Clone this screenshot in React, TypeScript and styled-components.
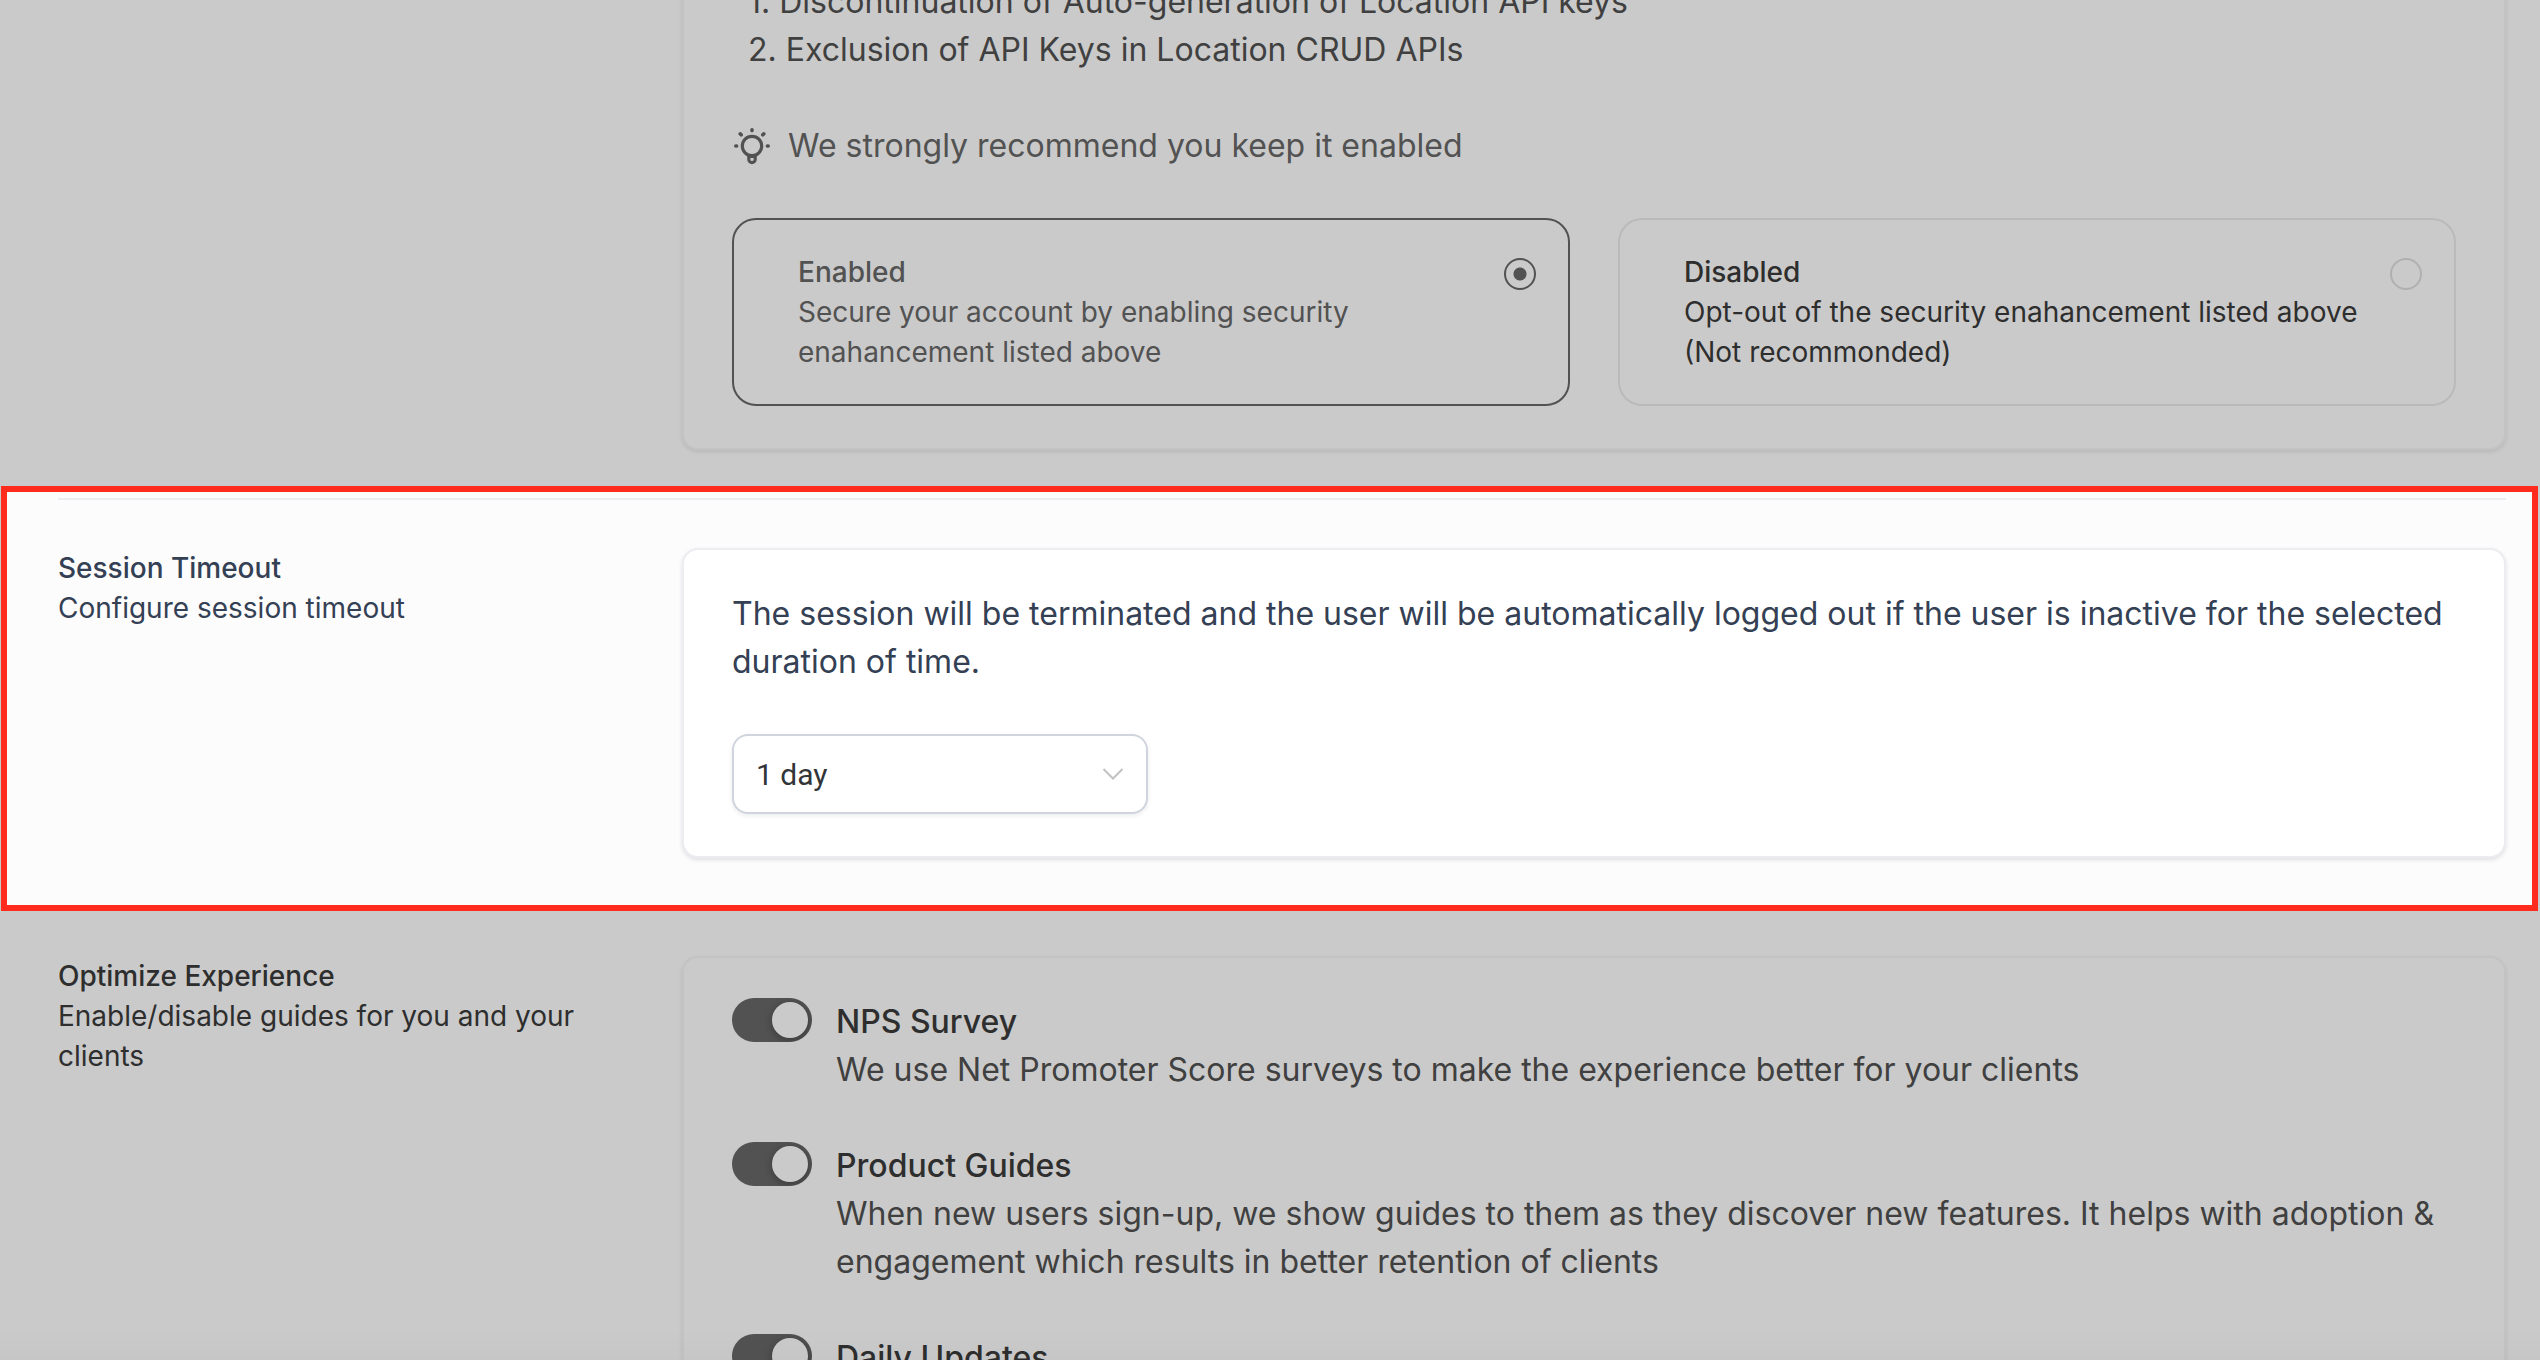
import React from "react";
import styled, { createGlobalStyle } from "styled-components";

const GlobalStyle = createGlobalStyle`
  * { box-sizing: border-box; }
  body {
    margin: 0;
    background: #cacaca;
    font-family: Inter, "Liberation Sans", sans-serif;
    overflow: hidden;
    -webkit-font-smoothing: antialiased;
  }
  p, h2, h3, ol, fieldset { margin: 0; padding: 0; border: 0; }
`;

const Page = styled.main`
  position: relative;
  height: 100vh;
  overflow: hidden;
`;

/* The settings list is shown scrolled part of the way down. */
const SettingsList = styled.div`
  margin-top: -64px;
`;

const Section = styled.section`
  position: relative;
  padding: 0 34px 48px 58px;
`;

const Row = styled.div<{ $line?: string }>`
  position: relative;
  display: grid;
  grid-template-columns: repeat(4, minmax(0, 1fr));
  column-gap: 48px;
  align-items: start;
  ${(p) => p.$line && `border-top: 2px solid ${p.$line}; padding-top: 48px;`}
`;

const RaisedRow = styled(Row)`
  z-index: 2;
`;

const Highlight = styled.div`
  position: absolute;
  z-index: 1;
  inset: -12px 2px -5px 1px;
  border: 6px solid #ff2b1c;
  background: #fcfcfc;
`;

const Intro = styled.header<{ $color: string }>`
  font-size: 28px;
  line-height: 40px;
  color: ${(p) => p.$color};
`;

const IntroTitle = styled.h2`
  font-size: 28px;
  font-weight: 500;
`;

const Card = styled.div<{ $lit?: boolean }>`
  grid-column: 2 / span 3;
  display: flex;
  flex-direction: column;
  gap: 48px;
  padding: 40px 48px 42px;
  border: 2px solid ${(p) => (p.$lit ? "#ececf1" : "#c3c3c3")};
  border-radius: 16px;
  background: ${(p) => (p.$lit ? "#ffffff" : "#cacaca")};
  box-shadow: 0 2px 4px ${(p) => (p.$lit ? "rgba(16, 24, 40, 0.12)" : "rgba(0, 0, 0, 0.09)")};
`;

const BodyText = styled.p<{ $color: string }>`
  font-size: 32px;
  line-height: 48px;
  color: ${(p) => p.$color};
`;

const Changes = styled.ol`
  list-style: none;
  padding-left: 16px;
  font-size: 32px;
  line-height: 48px;
  color: #404040;
`;

const Hint = styled.div`
  display: flex;
  align-items: center;
  gap: 16px;
  color: #525252;
`;

const Options = styled.fieldset`
  display: grid;
  grid-template-columns: 1fr 1fr;
  gap: 48px;
`;

const Option = styled.label<{ $selected?: boolean }>`
  display: flex;
  align-items: flex-start;
  gap: 24px;
  padding: 32px 32px 32px 64px;
  border: 2px solid ${(p) => (p.$selected ? "#525252" : "#bababa")};
  border-radius: 24px;
  font-size: 28px;
  line-height: 40px;
  color: ${(p) => (p.$selected ? "#525252" : "#2e2e2e")};
`;

const OptionText = styled.span`
  flex: 1;
`;

const OptionName = styled.span`
  display: block;
  font-weight: 500;
`;

const Radio = styled.input`
  appearance: none;
  flex: none;
  width: 32px;
  height: 32px;
  margin: 6px 0 0;
  border: 2px solid #b0b0b0;
  border-radius: 50%;
  &:checked {
    border-color: #525252;
    background: radial-gradient(circle, #525252 6px, transparent 7px);
  }
`;

const SelectBox = styled.div`
  position: relative;
  width: 416px;
  max-width: 100%;
`;

const Select = styled.select`
  appearance: none;
  display: block;
  width: 100%;
  height: 80px;
  padding: 0 64px 0 22px;
  border: 2px solid #d0d5dd;
  border-radius: 16px;
  background: #ffffff;
  box-shadow: 0 2px 4px rgba(16, 24, 40, 0.08);
  font-family: Roboto, Inter, sans-serif;
  font-size: 30px;
  color: #333639;
`;

const SelectArrow = styled.svg`
  position: absolute;
  right: 25px;
  top: 30px;
  width: 20px;
  height: 20px;
  pointer-events: none;
`;

const GuideItem = styled.div`
  display: flex;
  align-items: flex-start;
  gap: 24px;
`;

const Toggle = styled.input`
  appearance: none;
  flex: none;
  width: 80px;
  height: 44px;
  margin: 0;
  padding: 4px;
  border-radius: 22px;
  background: #a0a0a0;
  display: flex;
  overflow: hidden;
  &::before {
    content: "";
    width: 36px;
    height: 36px;
    border-radius: 50%;
    background: #cacaca;
    box-shadow: 0 2px 8px rgba(0, 0, 0, 0.3);
  }
  &:checked {
    background: #525252;
    justify-content: flex-end;
  }
`;

const GuideText = styled.label`
  flex: 1;
  font-size: 32px;
  line-height: 48px;
  color: #404040;
`;

const GuideName = styled.span`
  display: block;
  font-weight: 500;
  color: #2e2e2e;
`;

const BottomFade = styled.div`
  position: absolute;
  inset: auto 0 0 0;
  height: 32px;
  background: linear-gradient(transparent, rgba(0, 0, 0, 0.02));
  pointer-events: none;
`;

const Bulb = () => (
  <svg width="40" height="40" viewBox="0 0 40 40" fill="none" stroke="currentColor" strokeLinecap="round" aria-hidden="true">
    <circle cx="20" cy="20" r="9.7" strokeWidth="3.2" />
    <path d="M16.8 29.5v3.9a3.2 3.2 0 0 0 6.4 0v-3.9" strokeWidth="3.1" />
    <path d="M17 30.6h6" strokeWidth="2.8" />
    <path d="M20 3.8v.8M8.2 7.8l1 1M31.8 7.8l-1 1M3.8 20h.8M35.4 20h.8" strokeWidth="3.6" />
  </svg>
);

const guides = [
  { id: "nps", name: "NPS Survey", text: "We use Net Promoter Score surveys to make the experience better for your clients" },
  {
    id: "guides",
    name: "Product Guides",
    text: "When new users sign-up, we show guides to them as they discover new features. It helps with adoption & engagement which results in better retention of clients",
  },
  { id: "updates", name: "Daily Updates", text: "" },
];

export default function App() {
  return (
    <>
      <GlobalStyle />
      <Page>
        <SettingsList>
          <Section>
            <Row>
              <Card>
                <Changes>
                  <li>1. Discontinuation of Auto-generation of Location API keys</li>
                  <li>2. Exclusion of API Keys in Location CRUD APIs</li>
                </Changes>
                <Hint>
                  <Bulb />
                  <BodyText $color="#525252">We strongly recommend you keep it enabled</BodyText>
                </Hint>
                <Options>
                  <Option $selected>
                    <OptionText>
                      <OptionName>Enabled</OptionName>
                      Secure your account by enabling security enahancement listed above
                    </OptionText>
                    <Radio type="radio" name="security" defaultChecked />
                  </Option>
                  <Option>
                    <OptionText>
                      <OptionName>Disabled</OptionName>
                      Opt-out of the security enahancement listed above (Not recommonded)
                    </OptionText>
                    <Radio type="radio" name="security" />
                  </Option>
                </Options>
              </Card>
            </Row>
          </Section>

          <Section>
            <Highlight />
            <RaisedRow $line="#ececf1">
              <Intro $color="#344054">
                <IntroTitle>Session Timeout</IntroTitle>
                <p>Configure session timeout</p>
              </Intro>
              <Card $lit>
                <BodyText $color="#344054">
                  The session will be terminated and the user will be automatically logged out if the user is inactive
                  for the selected duration of time.
                </BodyText>
                <SelectBox>
                  <Select aria-label="Session timeout" defaultValue="1 day">
                    <option>1 day</option>
                  </Select>
                  <SelectArrow viewBox="0 0 20 20" fill="none" stroke="#c2c2c2" strokeWidth="2" aria-hidden="true">
                    <path d="M0.5 5l9.5 9.5L19.5 5" />
                  </SelectArrow>
                </SelectBox>
              </Card>
            </RaisedRow>
          </Section>

          <Section>
            <Row $line="#c0c0c0">
              <Intro $color="#2e2e2e">
                <IntroTitle>Optimize Experience</IntroTitle>
                <p>Enable/disable guides for you and your clients</p>
              </Intro>
              <Card>
                {guides.map((g) => (
                  <GuideItem key={g.id}>
                    <Toggle type="checkbox" role="switch" id={g.id} defaultChecked />
                    <GuideText htmlFor={g.id}>
                      <GuideName>{g.name}</GuideName>
                      {g.text}
                    </GuideText>
                  </GuideItem>
                ))}
              </Card>
            </Row>
          </Section>
        </SettingsList>
        <BottomFade />
      </Page>
    </>
  );
}
